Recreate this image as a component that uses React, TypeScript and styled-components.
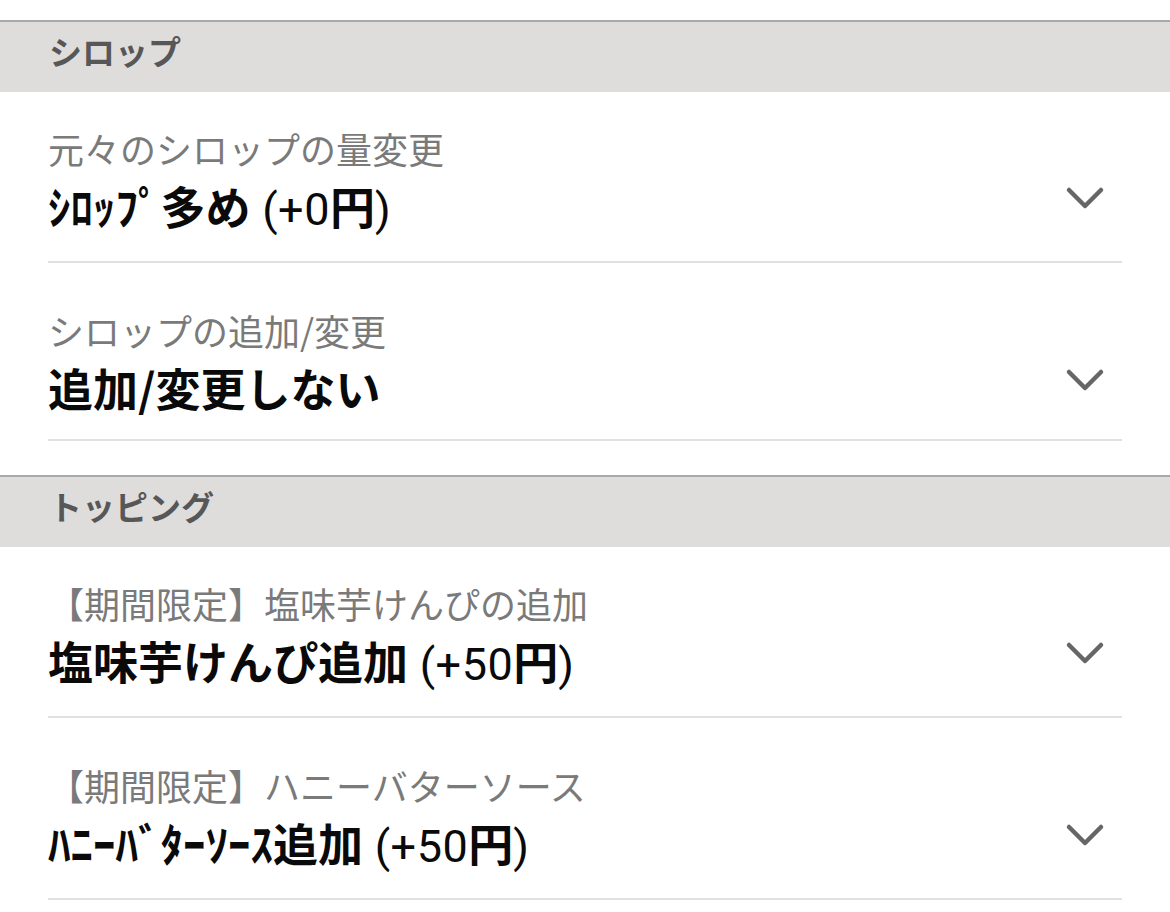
import React from "react";
import styled, { createGlobalStyle } from "styled-components";

const Global = createGlobalStyle`
  html, body {
    margin: 0;
    padding: 0;
    background: #ffffff;
  }
  body {
    font-family: "Noto Sans CJK JP", "Noto Sans", sans-serif;
    -webkit-font-smoothing: antialiased;
  }
`;

const Page = styled.div`
  width: 1170px;
  padding-top: 20px;
  display: flex;
  flex-direction: column;
  gap: 34px;
`;

const Section = styled.section`
  display: flex;
  flex-direction: column;
  border-top: 2px solid #a9a9a9;
`;

const SectionHeader = styled.h2`
  margin: 0;
  height: 70px;
  box-sizing: border-box;
  padding: 0 49px 11px;
  display: flex;
  align-items: center;
  background: #dedddc;
  color: #575757;
  font-size: 33px;
  font-weight: 700;
  line-height: 1;
`;

const Item = styled.div<{ $first?: boolean }>`
  margin: 0 48px;
  padding: ${(p) => (p.$first ? "34px" : "45px")} 0 23px;
  border-bottom: 2px solid #e1e1e1;
  display: flex;
  flex-direction: column;
`;

const Label = styled.div`
  font-size: 36px;
  line-height: 44px;
  color: #7a7a7a;
  font-weight: 400;
`;

const ValueRow = styled.div`
  margin-top: 8px;
  display: flex;
  justify-content: space-between;
  align-items: flex-start;
`;

const Value = styled.div`
  font-size: 45px;
  line-height: 56px;
  font-weight: 700;
  color: #0a0a0a;
  white-space: nowrap;
`;

const Price = styled.span`
  font-family: Roboto, "Noto Sans CJK JP", sans-serif;
  font-weight: 400;
  letter-spacing: 0.5px;
`;

const Yen = styled.span`
  font-family: "Noto Sans CJK JP", sans-serif;
  font-weight: 700;
  letter-spacing: 0;
`;

const Chevron = styled.svg`
  flex: none;
  width: 40px;
  height: 24px;
  margin: 8px 17px 0 0;
`;

const ChevronIcon = () => (
  <Chevron viewBox="0 0 40 24">
    <polyline
      points="4,4 20,20 36,4"
      fill="none"
      stroke="#666666"
      strokeWidth="4.5"
      strokeLinecap="round"
      strokeLinejoin="round"
    />
  </Chevron>
);

type Opt = { label: string; value: string; price?: string };

const sections: { title: string; items: Opt[] }[] = [
  {
    title: "シロップ",
    items: [
      { label: "元々のシロップの量変更", value: "ｼﾛｯﾌﾟ多め", price: "0" },
      { label: "シロップの追加/変更", value: "追加/変更しない" },
    ],
  },
  {
    title: "トッピング",
    items: [
      { label: "【期間限定】塩味芋けんぴの追加", value: "塩味芋けんぴ追加", price: "50" },
      { label: "【期間限定】ハニーバターソース", value: "ﾊﾆｰﾊﾞﾀｰｿｰｽ追加", price: "50" },
    ],
  },
];

export default function App() {
  return (
    <>
      <Global />
      <Page>
        {sections.map((s) => (
          <Section key={s.title}>
            <SectionHeader>{s.title}</SectionHeader>
            {s.items.map((it, i) => (
              <Item key={it.label} $first={i === 0}>
                <Label>{it.label}</Label>
                <ValueRow>
                  <Value>
                    {it.value}
                    {it.price !== undefined && (
                      <Price>
                        {" "}(+{it.price}
                        <Yen>円</Yen>)
                      </Price>
                    )}
                  </Value>
                  <ChevronIcon />
                </ValueRow>
              </Item>
            ))}
          </Section>
        ))}
      </Page>
    </>
  );
}
